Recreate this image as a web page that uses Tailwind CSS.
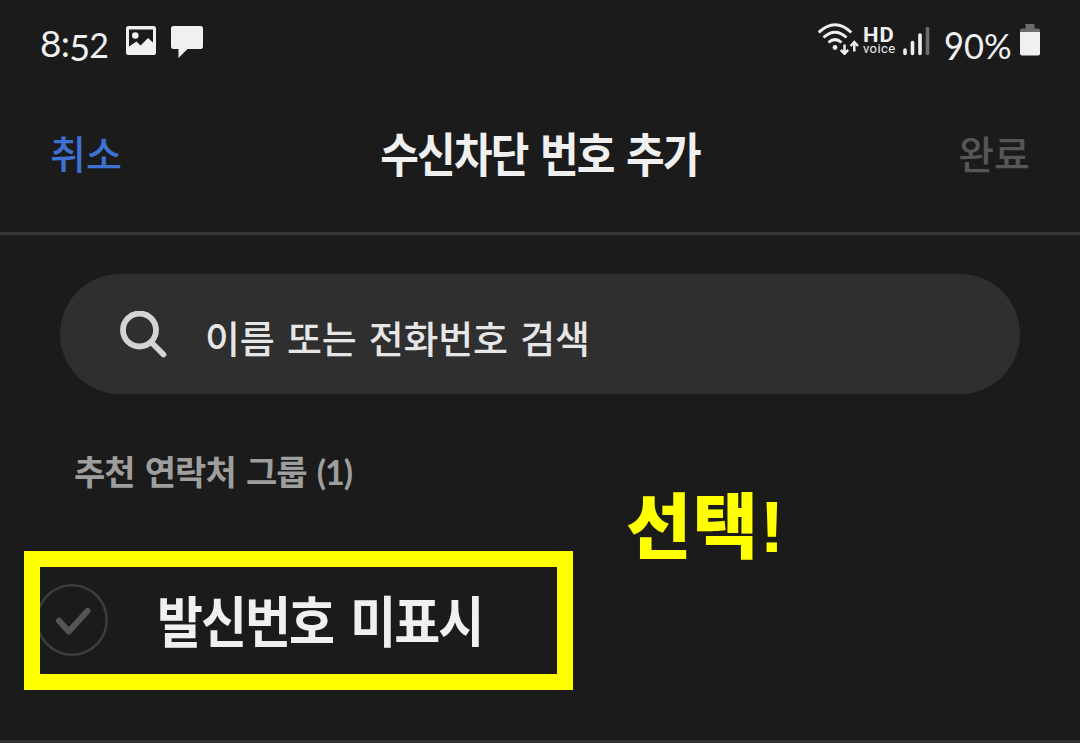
<!DOCTYPE html>
<html lang="ko">
<head>
  <meta charset="UTF-8">
  <meta name="viewport" content="width=device-width, initial-scale=1.0">
  <title>수신차단 번호 추가</title>
  <script src="https://cdn.jsdelivr.net/npm/@tailwindcss/browser@4"></script>
</head>
<body class="bg-[#1b1b1b] text-[#f0f0f0] font-['Lato','Noto_Sans_CJK_KR',sans-serif] overflow-hidden">
  <div class="flex flex-col w-[1080px] h-[743px] overflow-hidden whitespace-nowrap">

    <!-- Status bar -->
    <div class="flex justify-between h-[84px] shrink-0 pl-10 pr-10">
      <div class="flex items-start">
        <span class="flex w-[86px] pt-[19px] text-[37px] leading-[48px] tracking-[-0.800px]">8:<span class="pt-[4px] text-[36px]">5</span><span class="pt-[2px] text-[34px]">2</span></span>
        <!-- Picture -->
        <svg class="mt-[26px] w-[30px] h-[29px]" viewBox="0 0 30 29">
          <path fill="#f0f0f0" fill-rule="evenodd" d="M2.5 0h25Q30 0 30 2.500v24Q30 29 27.500 29h-25Q0 29 0 26.500v-24Q0 0 2.500 0zM3 3.500v17l7.500-5 4 4 7.500-7.500 5 4.500v-13z"/>
          <circle cx="9.300" cy="9.500" r="3.300" fill="#f0f0f0"/>
        </svg>
        <!-- Message -->
        <svg class="mt-[26px] ml-[15px] w-8 h-8" viewBox="0 0 32 32">
          <path fill="#f0f0f0" d="M2.500 0h27Q32 0 32 2.500v18Q32 23 29.500 23H16.500L7.500 32V23h-5Q0 23 0 20.500v-18Q0 0 2.500 0z"/>
        </svg>
      </div>
      <div class="flex items-start">
        <!-- Wi-Fi -->
        <svg class="mt-[23px] w-[42px] h-8" viewBox="0 0 42 32" fill="none" stroke="#f0f0f0" stroke-width="3">
          <path d="M.7 9.500Q17-6 33.300 9.500M5.500 14.500Q17 4 28.500 14.500M10.500 19.500Q17 13.700 23.500 19.500"/>
          <circle cx="17" cy="24.500" r="2.400" fill="#f0f0f0" stroke="none"/>
          <path stroke-width="2.500" d="M26.500 21.500v9M22.800 26.800l3.700 4 3.700-4M36.300 28.500v-9M32.600 23l3.700-4 3.700 4"/>
        </svg>
        <span class="mt-[27px] ml-[3px] w-[34px] flex flex-col font-['Roboto',sans-serif]">
          <span class="text-[20px] leading-[17px] font-bold tracking-[0.800px] scale-x-110 origin-left">HD</span>
          <span class="text-[13px] leading-[9px] tracking-[0.400px]">voice</span>
        </span>
        <!-- Signal -->
        <svg class="mt-[26px] ml-[6px] w-7 h-[30px]" viewBox="0 0 28 30" stroke="#f0f0f0" stroke-width="3.600" stroke-linecap="round">
          <path d="M2 24v3.500M9.500 16.500v11M17 9v18.500"/>
          <path stroke="#6c6c6c" d="M24.500 2.500v25"/>
        </svg>
        <span class="ml-[13px] w-[76px] pt-[22px] text-[34.500px] leading-[48px]"><span class="inline-block scale-y-110">9</span>0%</span>
        <!-- Battery -->
        <svg class="mt-[24px] w-5 h-8" viewBox="0 0 20 32">
          <path fill="#6c6c6c" d="M5.500 0h9v4.500H18Q20 4.500 20 6.500V9H0V6.500Q0 4.500 2 4.500h3.500z"/>
          <path fill="#f0f0f0" d="M0 8h20v21.500Q20 31.500 18 31.500H2Q0 31.500 0 29.500z"/>
        </svg>
      </div>
    </div>

    <!-- Title bar -->
    <header class="flex items-center justify-between h-[151px] shrink-0 px-[50px] pb-[8px] border-b-[3px] border-[#363636]">
      <button class="text-[39px] leading-[60px] font-medium text-[#3f71d4]">취소</button>
      <h1 class="text-[42px] leading-[60px] font-bold tracking-[-1.800px] [word-spacing:4px] scale-y-110">수신차단 번호 추가</h1>
      <button class="text-[39px] leading-[60px] font-medium text-[#565656]">완료</button>
    </header>

    <!-- Search -->
    <div class="flex items-center mt-[39px] mx-[60px] h-[120px] shrink-0 rounded-full bg-[#2f2f2f] pl-[60px]">
      <svg class="w-[47px] h-[47px]" viewBox="0 0 47 47" fill="none" stroke="#d4d4d4">
        <circle cx="19.500" cy="19" r="16.500" stroke-width="5.800"/>
        <path stroke-width="5.600" stroke-linecap="round" d="M31.500 31.500l12 12"/>
      </svg>
      <span class="ml-[38px] pt-[8px] text-[38px] leading-[60px] font-medium [word-spacing:3px] tracking-[-0.200px] text-[#e6e6e6]">이름 또는 전화번호 검색</span>
    </div>

    <!-- Suggested groups -->
    <div class="flex justify-between h-[157px] shrink-0 pl-[74px] pr-[296px]">
      <h2 class="mt-[48px] text-[34px] leading-[60px] font-bold tracking-[-1px] [word-spacing:3px] text-[#9e9e9e]">추천 연락처 그룹 (1)</h2>
      <strong class="mt-[78px] h-[80px] text-[71px] leading-[100px] tracking-[1.500px] -translate-y-[1px] font-black text-[#ffff00] font-['Noto_Sans_CJK_KR',sans-serif]">선택<span class="text-[73px] leading-none tracking-normal font-['Liberation_Sans',sans-serif]">!</span></strong>
    </div>

    <!-- Highlighted row -->
    <div class="flex items-center ml-6 w-[549px] h-[139px] shrink-0 border-[16px] border-[#ffff00] overflow-hidden">
      <svg class="-ml-1 -mt-[2px] w-[72px] h-[72px] shrink-0" viewBox="0 0 72 72" fill="none">
        <circle cx="36" cy="36" r="34.700" stroke="#3c3c3c" stroke-width="2.600"/>
        <path d="M23 36.700l9.700 10.800L51.500 27" stroke="#555" stroke-width="6" stroke-linecap="round" stroke-linejoin="round"/>
      </svg>
      <span class="ml-[49px] text-[50px] leading-[60px] font-bold tracking-[-2px] [word-spacing:7px] scale-y-110">발신번호 미표시</span>
    </div>

    <div class="mt-auto h-[3px] shrink-0 bg-[#303030]"></div>
  </div>
</body>
</html>
